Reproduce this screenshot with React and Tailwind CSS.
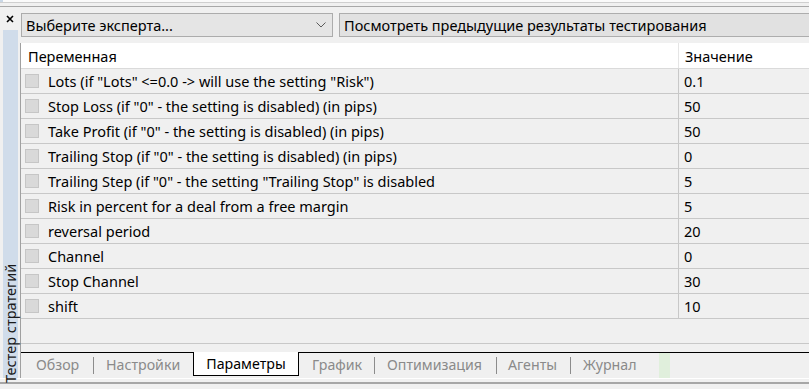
import React from "react";

const rows = [
  ['Lots (if "Lots" <=0.0 -> will use the setting "Risk")', "0.1"],
  ['Stop Loss (if "0" - the setting is disabled) (in pips)', "50"],
  ['Take Profit (if "0" - the setting is disabled) (in pips)', "50"],
  ['Trailing Stop (if "0" - the setting is disabled) (in pips)', "0"],
  ['Trailing Step (if "0" - the setting "Trailing Stop" is disabled', "5"],
  ["Risk in percent for a deal from a free margin", "5"],
  ["reversal period", "20"],
  ["Channel", "0"],
  ["Stop Channel", "30"],
  ["shift", "10"],
];

function Sep() {
  return (
    <div className="h-[24px] w-px flex items-center">
      <div className="w-px h-[17px] bg-[#8c8c8c]" />
    </div>
  );
}

export default function App() {
  return (
    <div className="w-[809px] h-[389px] bg-[#f0f0f0] overflow-hidden flex flex-col text-[14.5px] text-black font-['Noto_Sans',sans-serif] leading-none">
      {/* top strip */}
      <div className="h-[2px] bg-[#fafafa] flex">
        <div className="w-[3px] bg-[#c9d7e6]" />
      </div>
      <div className="h-px bg-[#cfcfcf]" />
      <div className="h-[3px] bg-[#f0f0f0]" />
      <div className="h-px bg-[#a8a8a8]" />

      {/* main */}
      <div className="h-[371px] flex">
        {/* left sidebar */}
        <div className="w-[20px] flex flex-col">
          <div className="h-[23px] flex items-start justify-center pt-[8px]">
            <svg width="8" height="8" viewBox="0 0 8 8">
              <path d="M1 1 L7 7 M7 1 L1 7" stroke="#000" strokeWidth="1.6" />
            </svg>
          </div>
          <div className="flex-1 ml-[3px] w-[15px] bg-[#d0dcea] relative">
            <div className="absolute left-[-1px] bottom-[-5px] origin-top-left -rotate-90 translate-y-full whitespace-nowrap text-[14.5px] text-[#1a1a1a] h-[16px] flex items-center">
              Тестер стратегий
            </div>
          </div>
        </div>

        {/* content */}
        <div className="flex-1 flex flex-col">
          <div className="h-[6px]" />
          <div className="h-[24px] flex">
            <div className="ml-px w-[312px] h-full border border-[#acacac] bg-[#e5e5e5] flex items-center pl-[4px] pr-[6px]">
              <span className="flex-1">Выберите эксперта...</span>
              <svg width="10" height="6" viewBox="0 0 10 6">
                <path d="M0.5 0.5 L5 5 L9.5 0.5" stroke="#5a5a5a" strokeWidth="1" fill="none" />
              </svg>
            </div>
            <div className="ml-[6px] flex-1 h-full border border-r-0 border-[#adadad] bg-[#e1e1e1] flex items-center pl-[4px]">
              Посмотреть предыдущие результаты тестирования
            </div>
          </div>
          <div className="flex-1 border-l border-[#a0a0a0] flex flex-col mt-[6px]">
            {/* header */}
            <div className="h-[26px] bg-white flex border-b border-[#dadada]">
              <div className="w-[657px] flex items-center pl-[7px] pt-[2px]">Переменная</div>
              <div className="w-px bg-[#e5e5e5]" />
              <div className="flex-1 flex items-center pl-[6px] pt-[2px]">Значение</div>
            </div>
            {rows.map(([name, val]) => (
              <div key={name} className="h-[25px] flex border-b border-[#c8c8c8]">
                <div className="w-[657px] flex items-center pl-[4px]">
                  <div className="w-[14px] h-[14px] border border-[#c6c6c6] bg-[#d9d9d9]" />
                  <span className="ml-[9px]">{name}</span>
                </div>
                <div className="w-px bg-[#c8c8c8]" />
                <div className="flex-1 flex items-center pl-[5px]">{val}</div>
              </div>
            ))}
            <div className="h-[25px] border-b border-[#c8c8c8]" />
            <div className="h-[8px]" />
            {/* tabs */}
            <div className="border-t border-black h-[26px] flex items-start text-[#8a8a8a] text-[14.2px] whitespace-nowrap">
              <div className="w-[72px] h-[24px] flex items-center pl-[15px] pt-px">Обзор</div>
              <Sep />
              <div className="w-[99px] h-[24px] flex items-center pl-[12px] pt-px">Настройки</div>
              <div className="h-[24px] w-[106px] border border-t-0 border-black bg-white text-black flex items-center justify-center -mt-px pt-[2px]">
                Параметры
              </div>
              <div className="w-[75px] h-[24px] flex items-center pl-[13px] pt-px">График</div>
              <Sep />
              <div className="w-[121px] h-[24px] flex items-center pl-[12px] pt-px">Оптимизация</div>
              <Sep />
              <div className="w-[73px] h-[24px] flex items-center pl-[11px] pt-px">Агенты</div>
              <Sep />
              <div className="w-[88px] h-[24px] flex items-center pl-[12px] pt-px">Журнал</div>
              <div className="w-[11px] h-[25px] bg-[#e0efdc]" />
            </div>
          </div>
        </div>
      </div>
      <div className="h-px bg-white" />
      <div className="h-[3px]" />
      <div className="h-[2px] bg-[#a6a6a6]" />
    </div>
  );
}
